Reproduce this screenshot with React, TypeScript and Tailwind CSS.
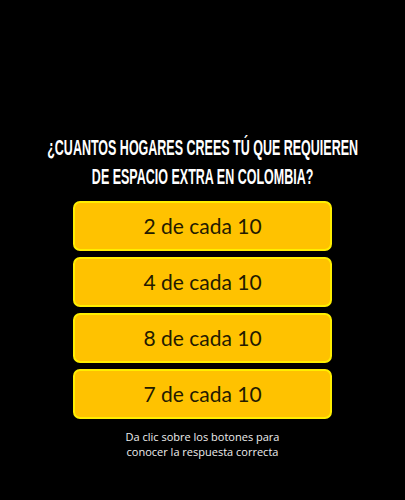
const options = ['2 de cada 10', '4 de cada 10', '8 de cada 10', '7 de cada 10']

function App() {
  return (
    <main className="flex h-[500px] w-full flex-col items-center bg-black">
      <h1 className="mt-[133px] scale-x-[0.568] whitespace-nowrap text-center font-['Liberation_Sans',sans-serif] text-[22px] font-bold uppercase leading-[29px] text-white">
        ¿Cuantos hogares crees tú que requieren
        <br />
        de espacio extra en Colombia?
      </h1>

      <div className="mt-[10px] flex w-[259px] flex-col gap-[6px]">
        {options.map((label) => (
          <button
            className="h-[50px] rounded-[7px] border-[2px] border-[#ffee00] bg-[#ffc200] font-['Lato',sans-serif] text-[21px] text-[#231a00]"
            key={label}
            type="button"
          >
            {label}
          </button>
        ))}
      </div>

      <p className="mt-[10px] text-center font-['Open_Sans',sans-serif] text-[11px] leading-[15px] text-[#eeeeee]">
        Da clic sobre los botones para
        <br />
        conocer la respuesta correcta
      </p>
    </main>
  )
}

export default App
